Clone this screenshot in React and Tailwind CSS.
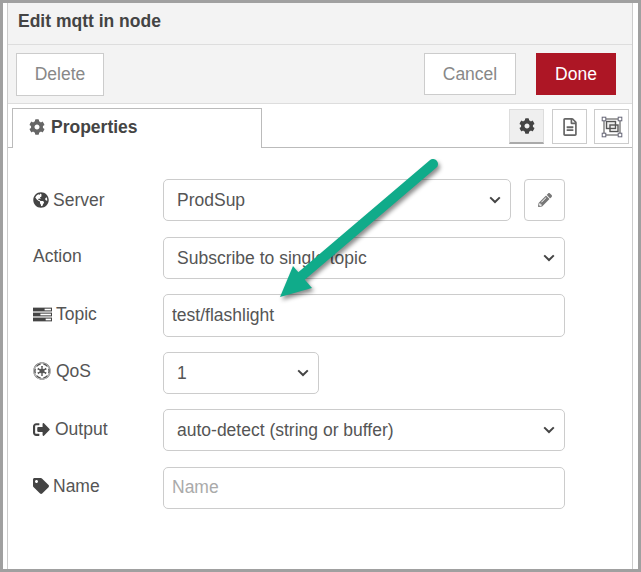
import React from "react";
import { FaCog, FaGlobeAmericas, FaEmpire, FaSignOutAlt, FaTag, FaPencilAlt, FaRegFileAlt } from "react-icons/fa";

const Chevron = () => (
  <svg width="12" height="8" viewBox="0 0 12 8" className="shrink-0">
    <path d="M1.2 1.4 L6 6 L10.8 1.4" fill="none" stroke="#444" strokeWidth="2" />
  </svg>
);

const TopicIcon = () => (
  <svg width="19" height="15" viewBox="0 0 18 14" className="shrink-0">
    <rect x="0" y="0.5" width="18" height="3.6" fill="#444" />
    <rect x="0" y="5.2" width="18" height="3.6" fill="#444" />
    <rect x="0" y="9.9" width="18" height="3.6" fill="#444" />
    <rect x="11" y="1.5" width="6" height="1.6" fill="#fff" />
    <rect x="7" y="6.2" width="10" height="1.6" fill="#fff" />
    <rect x="12" y="10.9" width="5" height="1.6" fill="#fff" />
  </svg>
);

const FrameIcon = () => (
  <svg width="22" height="22" viewBox="0 0 22 22">
    <rect x="3" y="3" width="16" height="16" fill="none" stroke="#666" strokeWidth="1.2" />
    <rect x="5.5" y="5.5" width="9" height="7" fill="#eee" stroke="#555" strokeWidth="1.4" />
    <rect x="9" y="9" width="8" height="6.5" fill="none" stroke="#555" strokeWidth="1.4" />
    {[[3, 3], [19, 3], [3, 19], [19, 19]].map(([x, y]) => (
      <rect key={`${x}-${y}`} x={x - 1.8} y={y - 1.8} width="3.6" height="3.6" fill="#fff" stroke="#667" strokeWidth="1" />
    ))}
  </svg>
);

const Label = ({ icon, children, gap = "gap-[4px]", shift = "-translate-y-[1px]" }) => (
  <div className={`w-[130px] shrink-0 flex items-center ${gap} ${shift} text-[#555]`}>
    {icon}
    <span>{children}</span>
  </div>
);

const Select = ({ value, className = "flex-1" }) => (
  <div className={`${className} h-[42px] bg-white border border-[#ccc] rounded-[5px] pl-[13px] pr-[9px] flex items-center justify-between text-[#555]`}>
    <span>{value}</span>
    <Chevron />
  </div>
);

const Arrow = () => (
  <svg width="641" height="572" viewBox="0 0 641 572" className="absolute top-0 left-0 pointer-events-none drop-shadow-[2px_3px_2px_rgba(0,0,0,0.45)]">
    <line x1="433" y1="164" x2="298" y2="279" stroke="#10ab8a" strokeWidth="10" strokeLinecap="round" />
    <polygon points="280,297 293,266 312,288" fill="#10ab8a" />
  </svg>
);

export default function App() {
  return (
    <div className="relative w-[641px] h-[572px] overflow-hidden bg-white border-[3px] border-[#a0a0a0] text-[17.5px] font-['Liberation_Sans',Arial,sans-serif]">
      <div className="ml-[4px] mr-[5px] h-full border-x border-[#ccc] flex flex-col">
        <div className="h-[37px] pb-[4px] bg-[#f3f3f3] border-b border-[#ddd] pl-[10px] flex items-center font-bold text-[#444] shrink-0 box-content">
          Edit mqtt in node
        </div>
        <div className="h-[58px] bg-[#f3f3f3] border-b border-[#ddd] pl-[8px] pr-[16px] flex items-center justify-between shrink-0 box-content">
          <button className="w-[88px] h-[43px] bg-white border border-[#ccc] text-[#888]">Delete</button>
          <div className="flex gap-[20px]">
            <button className="w-[92px] h-[42px] bg-white border border-[#ccc] text-[#888]">Cancel</button>
            <button className="w-[80px] h-[42px] bg-[#ad1625] text-white">Done</button>
          </div>
        </div>
        <div className="h-[39px] border-b border-[#bbb] pl-[4px] pr-[3px] pt-[4px] flex justify-between shrink-0 box-content">
          <div className="w-[250px] h-[40px] bg-white border border-b-0 border-[#bbb] pl-[16px] pt-[7px] flex items-center gap-[6px] pb-[10px] font-bold text-[#444]">
            <FaCog size={16} color="#666" />
            Properties
          </div>
          <div className="flex pt-[1px]">
            <div className="w-[35px] h-[35px] bg-[#efefef] border border-[#ddd] border-b-[2px] border-b-[#aaa] flex items-center justify-center">
              <FaCog size={16} color="#444" />
            </div>
            <div className="w-[35px] h-[35px] ml-[8px] bg-white border border-[#ccc] flex items-center justify-center">
              <FaRegFileAlt size={18} color="#666" />
            </div>
            <div className="w-[35px] h-[35px] ml-[7px] bg-white border border-[#ccc] flex items-center justify-center">
              <FrameIcon />
            </div>
          </div>
        </div>
        <div className="pl-[25px] pr-[67px] pt-[31px] flex flex-col">
          <div className="flex items-center mb-[16px]">
            <Label icon={<FaGlobeAmericas size={16} color="#444" />} shift="">Server</Label>
            <Select value="ProdSup" />
            <div className="w-[41px] h-[42px] ml-[13px] bg-white border border-[#ccc] rounded-[4px] flex items-center justify-center">
              <FaPencilAlt size={14} color="#777" />
            </div>
          </div>
          <div className="flex items-center mb-[15px]">
            <Label shift="-translate-y-[2px]">Action</Label>
            <Select value="Subscribe to single topic" />
          </div>
          <div className="flex items-center mb-[15px]">
            <Label icon={<TopicIcon />}>Topic</Label>
            <input
              defaultValue="test/flashlight"
              className="flex-1 min-w-0 h-[43px] bg-white border border-[#ccc] rounded-[5px] px-[8px] text-[#555] outline-none"
            />
          </div>
          <div className="flex items-center mb-[15px]">
            <Label icon={<FaEmpire size={18} color="#555" />} gap="gap-[5px]" shift="-translate-y-[2px]">QoS</Label>
            <Select value="1" className="w-[156px]" />
          </div>
          <div className="flex items-center mb-[16px]">
            <Label icon={<FaSignOutAlt size={17} color="#444" />} gap="gap-[5px]">Output</Label>
            <Select value="auto-detect (string or buffer)" />
          </div>
          <div className="flex items-center">
            <Label icon={<FaTag size={16} color="#444" />} shift="-translate-y-[2px]">Name</Label>
            <input
              placeholder="Name"
              className="flex-1 min-w-0 h-[42px] bg-white border border-[#ccc] rounded-[5px] pl-[8px] pr-[8px] pb-[2px] text-[#555] placeholder:text-[#aaa] outline-none"
            />
          </div>
        </div>
      </div>
      <div className="absolute -top-[3px] -left-[3px]">
        <Arrow />
      </div>
    </div>
  );
}
